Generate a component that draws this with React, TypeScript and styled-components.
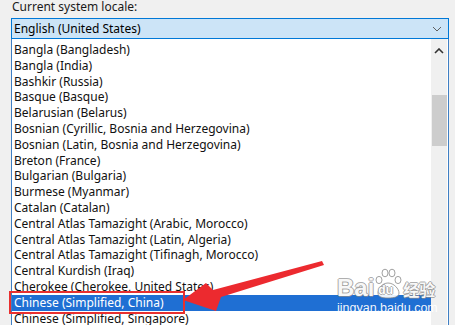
import React from 'react';
import styled, { createGlobalStyle, css } from 'styled-components';

const LOCALES = [
  'Bangla (Bangladesh)',
  'Bangla (India)',
  'Bashkir (Russia)',
  'Basque (Basque)',
  'Belarusian (Belarus)',
  'Bosnian (Cyrillic, Bosnia and Herzegovina)',
  'Bosnian (Latin, Bosnia and Herzegovina)',
  'Breton (France)',
  'Bulgarian (Bulgaria)',
  'Burmese (Myanmar)',
  'Catalan (Catalan)',
  'Central Atlas Tamazight (Arabic, Morocco)',
  'Central Atlas Tamazight (Latin, Algeria)',
  'Central Atlas Tamazight (Tifinagh, Morocco)',
  'Central Kurdish (Iraq)',
  'Cherokee (Cherokee, United States)',
  'Chinese (Simplified, China)',
  'Chinese (Simplified, Singapore)',
];

const SELECTED = 'Chinese (Simplified, China)';

const GlobalStyle = createGlobalStyle`
  html, body {
    margin: 0;
    padding: 0;
    background: #f0f0f0;
    overflow: hidden;
  }
  body {
    font-family: "Noto Sans", "Liberation Sans", sans-serif;
    font-size: 12px;
    color: #000;
  }
`;

const Page = styled.div`
  position: relative;
  width: 455px;
  height: 325px;
  overflow: hidden;
  padding-left: 11px;
  box-sizing: border-box;
`;

const Label = styled.div`
  height: 18px;
  line-height: 14px;
  padding-left: 1px;
  color: #1a1a1a;
`;

const Combo = styled.div`
  width: 438px;
  height: 21px;
  box-sizing: border-box;
  border: 1px solid #0078d7;
  background: #cce4f7;
  display: flex;
  align-items: center;
  justify-content: space-between;
  padding: 0 6px 0 2px;
`;

const List = styled.div`
  width: 438px;
  height: 300px;
  box-sizing: border-box;
  border: 1px solid #3f7fc4;
  border-top: none;
  background: #fff;
  display: flex;
`;

const Items = styled.div`
  flex: 1;
  padding-top: 3px;
`;

const Item = styled.div<{ selected?: boolean }>`
  height: 15.8px;
  line-height: 15.8px;
  padding-left: 2px;
  white-space: nowrap;
  overflow: hidden;
  color: #111;

  ${(props) => props.selected && css`
    background: #1f6fd3;
    color: #fff;
  `}
`;

const ScrollBar = styled.div`
  width: 16px;
  margin-right: 1px;
  background: #f0f0f0;
  display: flex;
  flex-direction: column;
  align-items: center;
  padding-top: 9px;
  box-sizing: border-box;
`;

const Thumb = styled.div`
  width: 15px;
  height: 51px;
  margin-top: 41px;
  background: #cdcdcd;
`;

const Highlight = styled.div`
  position: absolute;
  left: 9px;
  top: 291px;
  width: 176px;
  height: 23px;
  box-sizing: border-box;
  border: 2px solid #e8302f;
`;

const Overlay = styled.svg`
  position: absolute;
  left: 0;
  top: 0;
  pointer-events: none;
`;

const Watermark = styled.div`
  position: absolute;
  left: 337px;
  top: 265px;
  display: flex;
  flex-direction: column;
  align-items: flex-start;
  color: rgba(255, 255, 255, 0.95);
  text-shadow:
    1px 0 0 rgba(140, 140, 140, 0.7),
    -1px 0 0 rgba(140, 140, 140, 0.7),
    0 1px 0 rgba(140, 140, 140, 0.7),
    0 -1px 0 rgba(140, 140, 140, 0.7);
`;

const Brand = styled.div`
  display: flex;
  align-items: flex-end;
  font-family: "Liberation Sans", Arial, sans-serif;
  font-weight: 700;
  font-size: 24px;
  line-height: 26px;
  height: 36px;
`;

const PawMark = styled.span`
  position: relative;
  display: inline-block;
  width: 28px;
  height: 32px;
  margin-bottom: 2px;
`;

const PawText = styled.span`
  position: absolute;
  left: 4px;
  bottom: 3px;
  font-size: 12px;
  line-height: 12px;
  color: #fff;
`;

const BrandCn = styled.span`
  font-family: "Noto Sans CJK SC", sans-serif;
  font-size: 16px;
  font-weight: 700;
  line-height: 24px;
  margin-left: 1px;
`;

const Site = styled.div`
  font-family: "Liberation Sans", Arial, sans-serif;
  font-size: 12.5px;
  line-height: 14px;
  text-shadow: none;
`;

function Chevron({ up }: { up?: boolean }) {
  return (
    <svg width="10" height="6" viewBox="0 0 10 6">
      <path
        d={up ? 'M1 5 L5 1 L9 5' : 'M1 1 L5 5 L9 1'}
        fill="none"
        stroke={up ? '#333' : '#606060'}
        strokeWidth={up ? 1.6 : 1}
      />
    </svg>
  );
}

function Paw() {
  return (
    <svg width="28" height="32" viewBox="0 0 28 32" style={{ position: 'absolute', left: 0, top: 0 }}>
      <g fill="rgba(255,255,255,0.9)" stroke="rgba(130,130,130,0.75)" strokeWidth="1">
        <ellipse cx="5" cy="13" rx="3" ry="3.6" />
        <ellipse cx="11" cy="6" rx="3" ry="3.8" />
        <ellipse cx="18" cy="6" rx="3" ry="3.8" />
        <ellipse cx="24" cy="13" rx="3" ry="3.6" />
        <path d="M14 16 C8 16 4 22 4 26 C4 30 8 31 14 31 C20 31 25 30 25 26 C25 22 20 16 14 16 Z" />
      </g>
    </svg>
  );
}

export default function App(): JSX.Element {
  return (
    <>
      <GlobalStyle />
      <Page>
        <Label>Current system locale:</Label>
        <Combo>
          <span>English (United States)</span>
          <Chevron />
        </Combo>
        <List>
          <Items>
            {LOCALES.map((name) => (
              <Item key={name} selected={name === SELECTED}>{name}</Item>
            ))}
          </Items>
          <ScrollBar>
            <Chevron up />
            <Thumb />
          </ScrollBar>
        </List>

        <Watermark>
          <Brand>
            <span>Bai</span>
            <PawMark>
              <Paw />
              <PawText>du</PawText>
            </PawMark>
            <BrandCn>经验</BrandCn>
          </Brand>
          <Site>jingyan.baidu.com</Site>
        </Watermark>

        <Highlight />
        <Overlay width="455" height="325" viewBox="0 0 455 325">
          <path
            d="M322 261 L324 265 L221 297 L216 311 L183 300 L206 283 L213 290 Z"
            fill="#ec2a2f"
          />
        </Overlay>
      </Page>
    </>
  );
}
